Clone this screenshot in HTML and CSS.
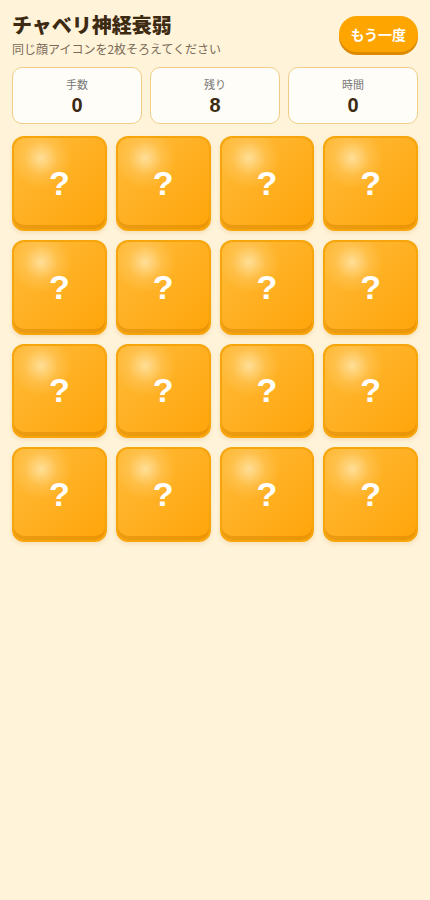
FILE: index.html
```html
<!DOCTYPE html>
<html lang="ja">
<head>
<meta charset="utf-8">
<link rel="stylesheet" href="styles.css">
</head>
<body>
<div class="app">
  <div class="header">
    <div class="titles">
      <h1 class="title">チャベリ神経衰弱</h1>
      <p class="sub">同じ顔アイコンを2枚そろえてください</p>
    </div>
    <button class="retry">もう一度</button>
  </div>

  <div class="stats">
    <div class="stat"><div class="label">手数</div><div class="value">0</div></div>
    <div class="stat"><div class="label">残り</div><div class="value">8</div></div>
    <div class="stat"><div class="label">時間</div><div class="value">0</div></div>
  </div>

  <div class="board">
    <div class="card">?</div>
    <div class="card">?</div>
    <div class="card">?</div>
    <div class="card">?</div>
    <div class="card">?</div>
    <div class="card">?</div>
    <div class="card">?</div>
    <div class="card">?</div>
    <div class="card">?</div>
    <div class="card">?</div>
    <div class="card">?</div>
    <div class="card">?</div>
    <div class="card">?</div>
    <div class="card">?</div>
    <div class="card">?</div>
    <div class="card">?</div>
  </div>
</div>
</body>
</html>
```

FILE: styles.css
```css
html, body{
  margin:0;
  padding:0;
  background:#fff3d9;
  font-family:"Noto Sans CJK JP", "Noto Sans", sans-serif;
  color:#3d2a12;
}

.app{
  padding:10px 12px;
}

.header{
  display:flex;
  justify-content:space-between;
  align-items:center;
  height:50px;
}

.title{
  margin:0;
  font-size:20px;
  font-weight:900;
  line-height:26px;
}

.sub{
  margin:2px 0 0;
  font-size:12px;
  line-height:18px;
  color:#7a6a58;
}

.retry{
  border:none;
  background:#ffa500;
  color:#fff;
  font-family:inherit;
  font-weight:700;
  font-size:14px;
  height:36px;
  padding:0 12px 0 11px;
  border-radius:18px;
  box-shadow:0 3px 0 #dd8a00;
  margin-top:-2px;
}

.stats{
  display:grid;
  grid-template-columns:repeat(3, 1fr);
  gap:8px;
  margin-top:7px;
}

.stat{
  background:#fffdf8;
  border:1px solid #f1cd85;
  border-radius:10px;
  height:55px;
  display:flex;
  flex-direction:column;
  align-items:center;
  justify-content:center;
}

.label{
  font-size:11px;
  line-height:14px;
  color:#777;
  margin-bottom:4px;
}

.value{
  font-family:"Liberation Sans", Arial, sans-serif;
  font-size:20px;
  font-weight:700;
  line-height:20px;
}

.board{
  display:grid;
  grid-template-columns:repeat(4, 1fr);
  gap:9px;
  margin-top:12px;
}

.card{
  aspect-ratio:1 / 1;
  box-sizing:border-box;
  border:2px solid #f7a50c;
  border-radius:12px;
  background:
    radial-gradient(circle at 30% 22%, rgba(255,230,170,0.85) 0, rgba(255,210,120,0.35) 18%, rgba(255,200,90,0) 32%),
    linear-gradient(135deg, #ffbb3a 0%, #ffa50a 100%);
  box-shadow:inset 0 -4px 0 rgba(210,130,0,0.45), 0 2px 4px rgba(200,140,40,0.18);
  display:flex;
  align-items:center;
  justify-content:center;
  color:#fff;
  font-family:"Liberation Sans", Arial, sans-serif;
  font-weight:700;
  font-size:34px;
}
```
